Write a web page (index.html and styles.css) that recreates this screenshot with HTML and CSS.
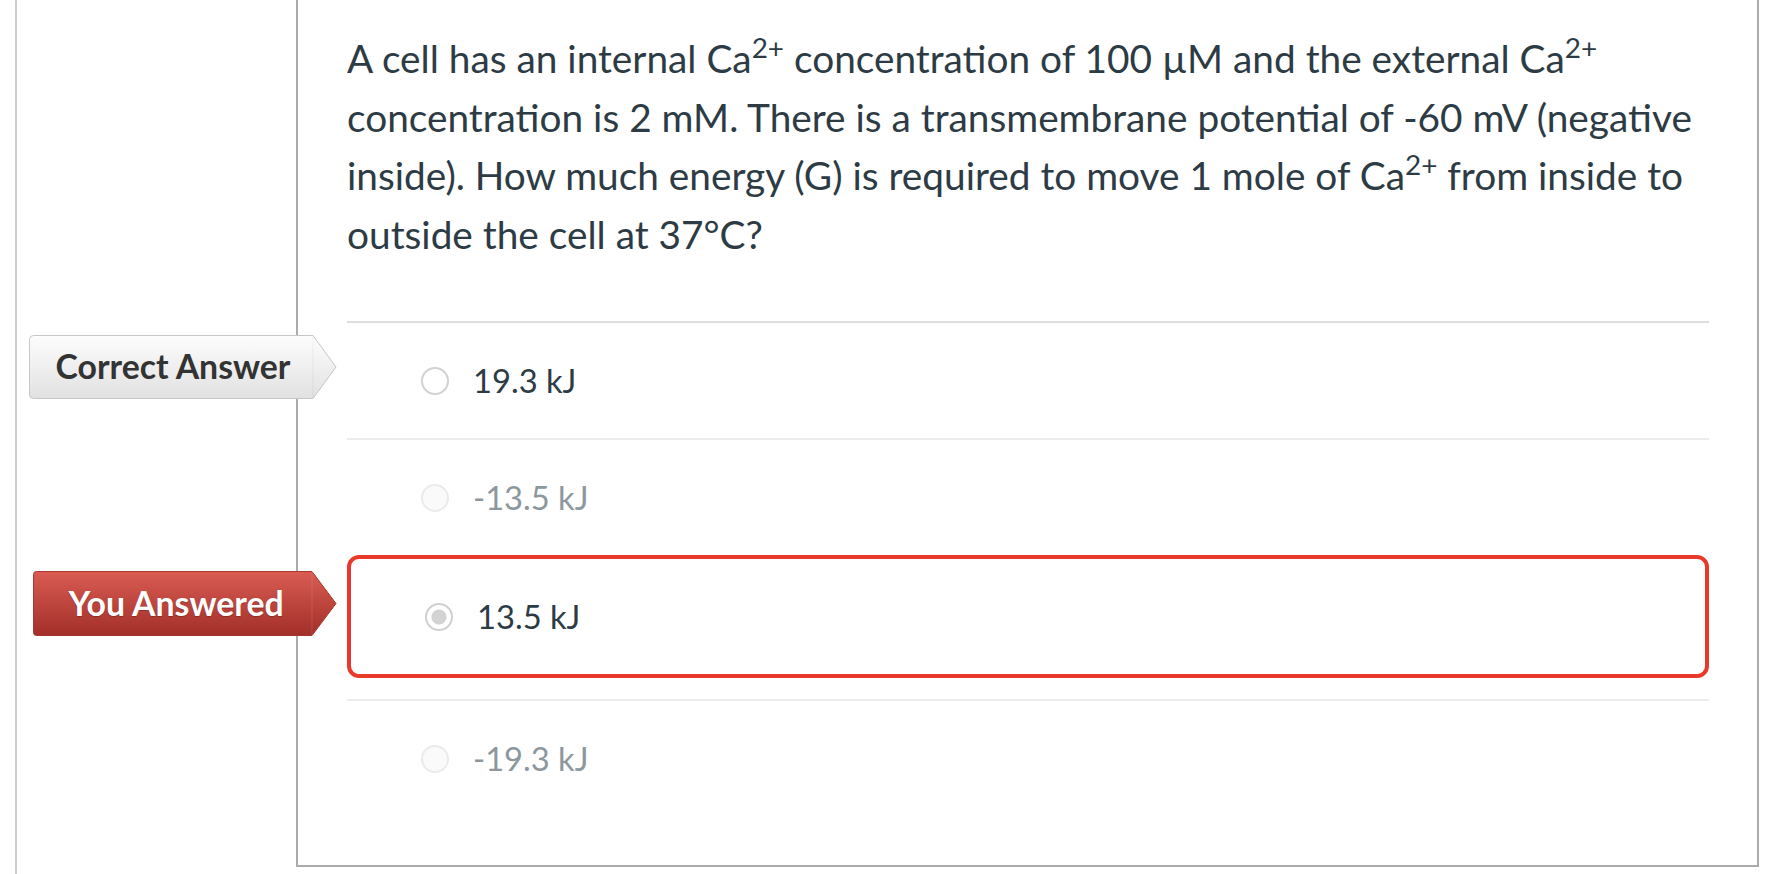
FILE: index.html
```html
<!DOCTYPE html>
<html lang="en">
<head>
<meta charset="utf-8">
<title>Quiz question</title>
<link rel="stylesheet" href="styles.css">
</head>
<body>
<div class="page">
  <div class="question">
    <div class="question-text">A cell has an internal Ca<sup>2+</sup> concentration of 100 µM and the external Ca<sup>2+</sup> concentration is 2 mM. There is a transmembrane potential of -60 mV (negative inside). How much energy (G) is required to move 1 mole of Ca<sup>2+</sup> from inside to outside the cell at 37°C?</div>
    <div class="answers">
      <div class="answer answer-first">
        <div class="flag flag-correct">
          <svg class="flag-shape" width="308" height="64" viewBox="0 0 308 64">
            <defs>
              <linearGradient id="gCorrect" x1="0" y1="0" x2="0" y2="1">
                <stop offset="0" stop-color="#fdfdfd"/>
                <stop offset="1" stop-color="#e1e1e1"/>
              </linearGradient>
            </defs>
            <path d="M4.5 0.5 H284 L307 32 L284 63.5 H4.5 Q0.5 63.5 0.5 59.5 V4.5 Q0.5 0.5 4.5 0.5 Z" fill="url(#gCorrect)" stroke="#c6c6c6"/>
            <line x1="284" y1="1" x2="284" y2="63" stroke="#000" stroke-opacity="0.05"/>
          </svg>
          <span class="flag-text">Correct Answer</span>
        </div>
        <span class="radio"></span>
        <span class="answer-text">19.3 kJ</span>
      </div>
      <div class="answer answer-muted">
        <span class="radio"></span>
        <span class="answer-text">-13.5 kJ</span>
      </div>
      <div class="answer answer-wrong">
        <div class="flag flag-you">
          <svg class="flag-shape" width="304" height="65" viewBox="0 0 304 65">
            <defs>
              <linearGradient id="gYou" x1="0" y1="0" x2="0" y2="1">
                <stop offset="0" stop-color="#d95c53"/>
                <stop offset="1" stop-color="#a22f29"/>
              </linearGradient>
            </defs>
            <path d="M3.5 0.5 H279 L303 32.5 L279 64.5 H3.5 Q0.5 64.5 0.5 61.5 V3.5 Q0.5 0.5 3.5 0.5 Z" fill="url(#gYou)" stroke="#a9372f"/>
            <line x1="279" y1="1" x2="279" y2="64" stroke="#ffffff" stroke-opacity="0.12"/>
          </svg>
          <span class="flag-text">You Answered</span>
        </div>
        <span class="radio radio-checked"></span>
        <span class="answer-text">13.5 kJ</span>
      </div>
      <div class="answer answer-muted answer-last">
        <span class="radio"></span>
        <span class="answer-text">-19.3 kJ</span>
      </div>
    </div>
  </div>
</div>
</body>
</html>
```

FILE: styles.css
```css
* { box-sizing: border-box; }

html, body {
  margin: 0;
  padding: 0;
  background: #ffffff;
}

body {
  font-family: "Lato", "Open Sans", "Liberation Sans", sans-serif;
  color: #2d3b45;
}

.page {
  margin-left: 15px;
  border-left: 2px solid #c9ced3;
  padding-left: 279px;
  padding-right: 7px;
  height: 874px;
}

.question {
  border: 2px solid #ababab;
  border-top: none;
  height: 867px;
  padding: 29px 48px 0 49px;
}

.question-text {
  font-size: 38.8px;
  line-height: 58.6px;
  color: #2d3b45;
}

.question-text sup {
  font-size: 0.72em;
  line-height: 0;
  vertical-align: 0.55em;
}

.answers {
  margin-top: 58px;
}

.answer {
  position: relative;
  display: flex;
  align-items: center;
  gap: 24px;
  border-top: 2px solid #ececec;
  padding: 43px 0 42px 74px;
  font-size: 32.7px;
  line-height: 30px;
  color: #2d3b45;
}

.answer-first {
  border-top-color: #dedede;
}

.answer-muted {
  color: #8d979e;
}

.answer-wrong {
  border: 4px solid #e9392a;
  border-radius: 12px;
  padding: 43px 0 42px 74px;
  margin-bottom: 21px;
}

.radio {
  flex: none;
  width: 28px;
  height: 28px;
  border-radius: 50%;
  border: 2px solid #d2d2d2;
  background: #ffffff;
}

.answer-muted .radio {
  border-color: #ebebeb;
  background: #fafafa;
}

.radio-checked {
  border-color: #d0d0d0;
  background: radial-gradient(circle, #d3d3d3 0, #d3d3d3 7px, #ffffff 8px);
}

.answer-text {
  white-space: nowrap;
}

.flag {
  position: absolute;
  right: calc(100% + 10px);
  display: flex;
  align-items: center;
  z-index: 2;
}

.flag-correct {
  top: 12px;
  width: 308px;
  height: 64px;
}

.flag-you {
  top: 12px;
  width: 304px;
  height: 65px;
}

.answer-wrong .flag {
  right: calc(100% + 14px);
}

.flag-shape {
  position: absolute;
  left: 0;
  top: 0;
  overflow: visible;
}

.flag-text {
  position: relative;
  width: calc(100% - 24px);
  text-align: center;
  font-weight: 700;
  font-size: 33.8px;
  line-height: 1;
}

.flag-correct .flag-text {
  color: #333333;
  padding-left: 4px;
}

.flag-you .flag-text {
  color: #ffffff;
  text-shadow: 0 1px 1px rgba(0, 0, 0, 0.25);
  padding-left: 6px;
}
```
